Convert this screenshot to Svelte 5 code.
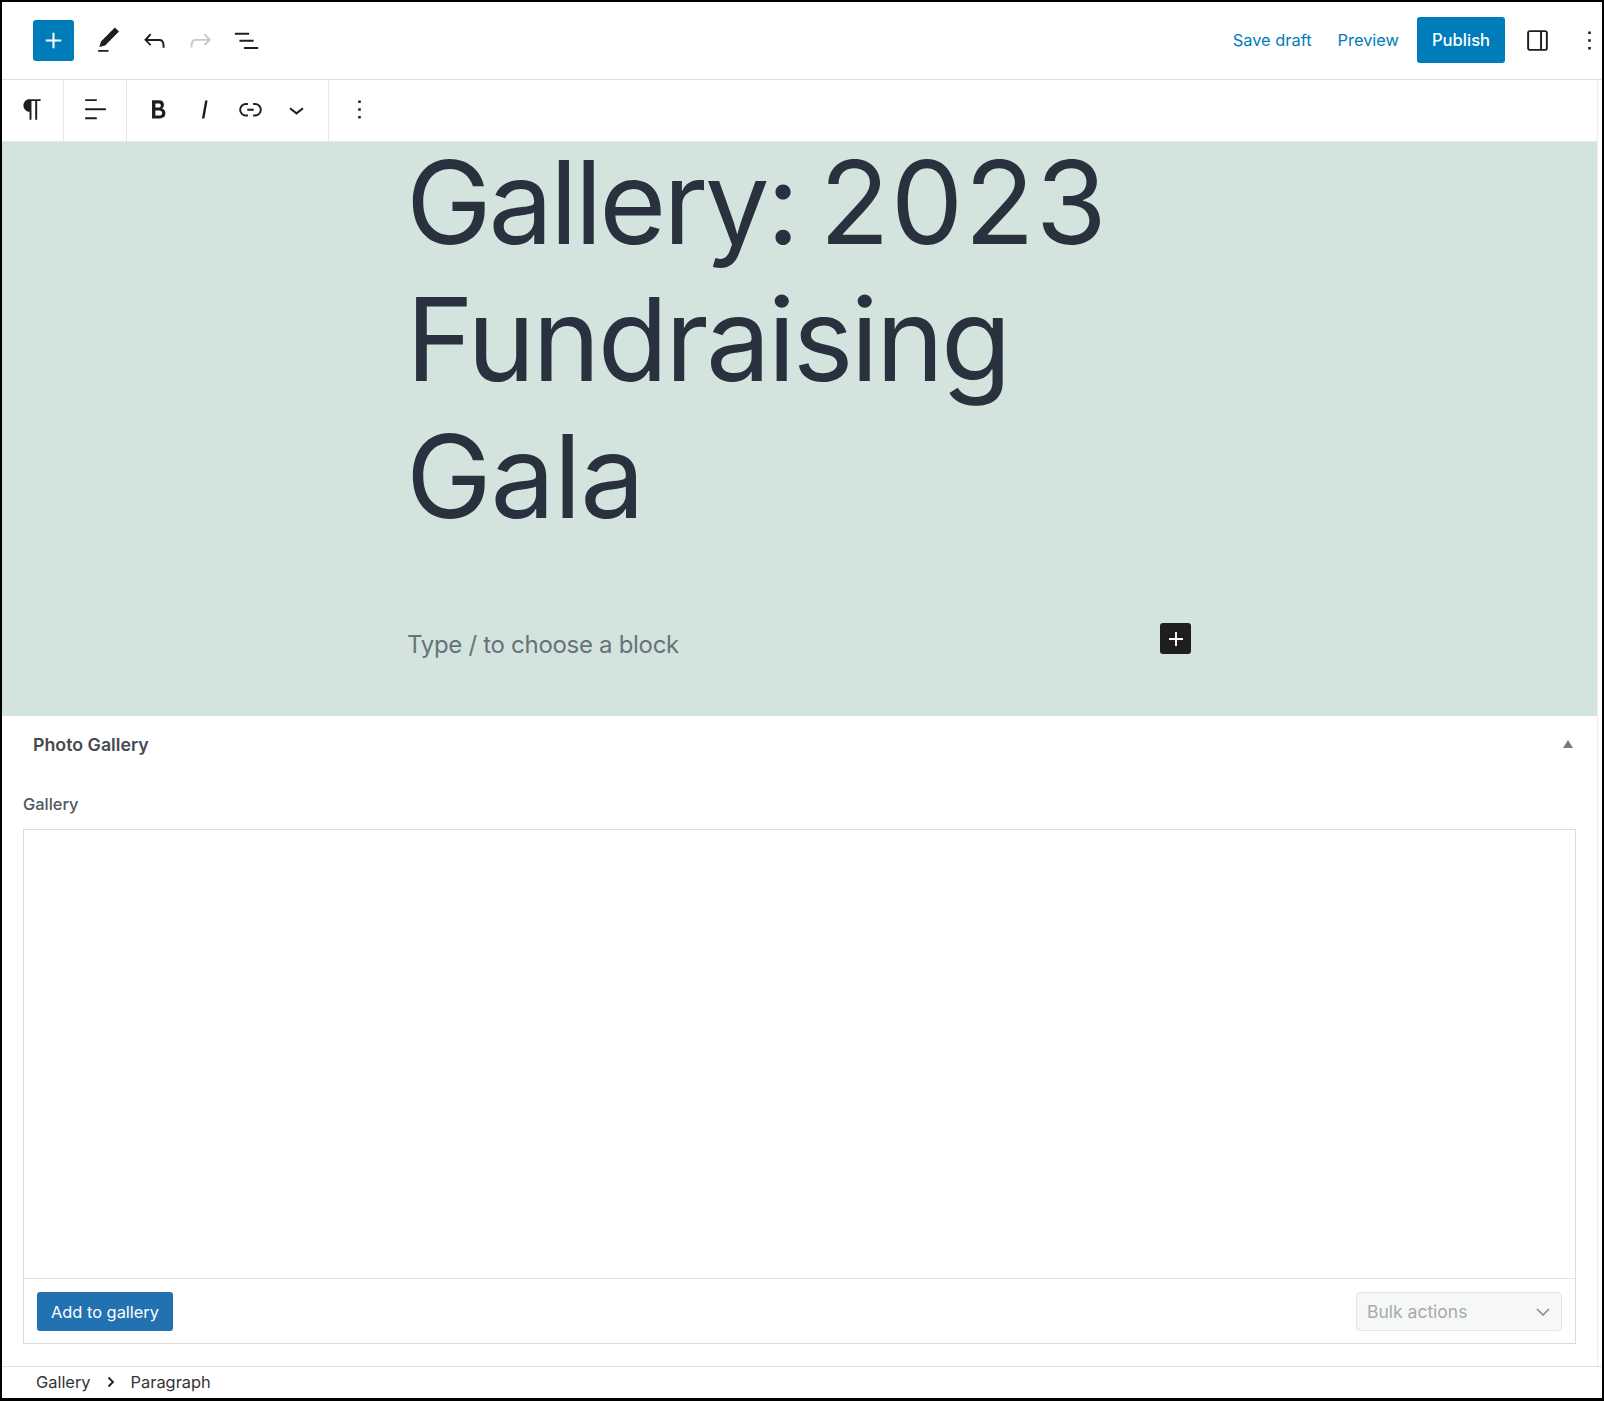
<script lang="ts">
  const icons = {
    plus: 'M18 11.2h-5.2V6h-1.6v5.2H6v1.6h5.2V18h1.6v-5.2H18z',
    pencil: 'M20.1 5.1L16.9 2 6.2 12.7l-1.3 4.4 4.5-1.3L20.1 5.1zM4 20.8h8v-1.5H4v1.5z',
    undo: 'M18.3 11.7c-.6-.6-1.4-.9-2.3-.9H6.7l2.9-3.3-1.1-1-4.5 5L8.5 16l1-1-2.7-2.7H16c.5 0 .9.2 1.3.5 1 1 1 3.4 1 4.5v.3h1.5v-.2c0-1.5 0-4.3-1.5-5.7z',
    redo: 'M15.6 6.5l-1.1 1 2.9 3.3H8c-.9 0-1.7.3-2.3.9-1.4 1.5-1.4 4.2-1.4 5.6v.2h1.5v-.3c0-1.1 0-3.5 1-4.5.3-.3.7-.5 1.3-.5h9.2L14.5 15l1.1 1.1 4.6-4.6-4.6-5z',
    list: 'M3 6h11v1.5H3V6zm3.5 5.5h11V13h-11v-1.5zM21 17H10v1.5h11V17z',
    sidebar: 'M18 4H6c-1.1 0-2 .9-2 2v12c0 1.1.9 2 2 2h12c1.1 0 2-.9 2-2V6c0-1.1-.9-2-2-2zm-4 14.5H6c-.3 0-.5-.2-.5-.5V6c0-.3.2-.5.5-.5h8v13zm4.5-.5c0 .3-.2.5-.5.5h-2.5v-13H18c.3 0 .5.2.5.5v12z',
    more: 'M13 19h-2v-2h2v2zm0-6h-2v-2h2v2zm0-6h-2V5h2v2z',
    paragraph: 'M18.3 4H9.9v-.1l-.9.2c-2.3.4-4 2.4-4 4.8s1.7 4.4 4 4.8l.7.1V20h1.5V5.5h2.9V20h1.5V5.5h2.7V4z',
    align: 'M13 5.5H4V4h9v1.5Zm7 7H4V11h16v1.5Zm-7 7H4V18h9v1.5Z',
    bold: 'M14.7 11.3c1-.6 1.5-1.6 1.5-3 0-2.3-1.3-3.4-4-3.4H7v14h5.8c1.4 0 2.5-.3 3.3-1 .8-.7 1.2-1.7 1.2-2.9.1-1.9-.8-3.1-2.6-3.7zm-5.1-4h2.3c.6 0 1.1.1 1.4.4.3.3.5.7.5 1.2s-.2 1-.5 1.2c-.3.3-.8.4-1.4.4H9.6V7.3zm4.6 9c-.4.3-1 .4-1.7.4H9.6v-3.9h2.9c.7 0 1.3.2 1.7.5.4.3.6.8.6 1.5s-.2 1.2-.6 1.5z',
    italic: 'M12.5 5L10 19h1.9l2.5-14z',
    link: 'M10 17.389H8.444A5.194 5.194 0 1 1 8.444 7H10v1.5H8.444a3.694 3.694 0 0 0 0 7.389H10v1.5ZM14 7h1.556a5.194 5.194 0 0 1 0 10.39H14v-1.5h1.556a3.694 3.694 0 0 0 0-7.39H14V7Zm-4.5 6h5v-1.5h-5V13Z',
    chevron: 'M17.5 11.6L12 16l-5.5-4.4.9-1.2L12 14l4.5-3.6 1 1.2z'
  };
</script>

{#snippet icon(d: string, cls = '')}
  <svg class={`icon ${cls}`} viewBox="0 0 24 24" aria-hidden="true"><path {d} /></svg>
{/snippet}

<div class="frame">
  <header class="topbar">
    <div class="tools">
      <button type="button" class="inserter" aria-label="Add block">{@render icon(icons.plus)}</button>
      <button type="button" class="tool" aria-label="Tools">{@render icon(icons.pencil)}</button>
      <button type="button" class="tool" aria-label="Undo">{@render icon(icons.undo)}</button>
      <button type="button" class="tool" aria-label="Redo" disabled>{@render icon(icons.redo)}</button>
      <button type="button" class="tool" aria-label="List view">{@render icon(icons.list)}</button>
    </div>
    <div class="actions">
      <button type="button" class="link-btn">Save draft</button>
      <button type="button" class="link-btn">Preview</button>
      <button type="button" class="publish">Publish</button>
      <button type="button" class="tool settings" aria-label="Settings">{@render icon(icons.sidebar)}</button>
      <button type="button" class="tool options" aria-label="Options">{@render icon(icons.more)}</button>
    </div>
  </header>

  <div class="workspace">
    <main class="content">
      <div class="block-toolbar">
        <div class="group first">
          <button type="button" class="tool" aria-label="Paragraph">{@render icon(icons.paragraph)}</button>
        </div>
        <div class="group second">
          <button type="button" class="tool" aria-label="Align">{@render icon(icons.align)}</button>
        </div>
        <div class="group third">
          <button type="button" class="tool" aria-label="Bold">{@render icon(icons.bold)}</button>
          <button type="button" class="tool" aria-label="Italic">{@render icon(icons.italic)}</button>
          <button type="button" class="tool" aria-label="Link">{@render icon(icons.link)}</button>
          <button type="button" class="tool" aria-label="More">{@render icon(icons.chevron)}</button>
        </div>
        <div class="group last">
          <button type="button" class="tool" aria-label="Options">{@render icon(icons.more)}</button>
        </div>
      </div>

      <section class="canvas">
        <h1><span class="w-gallery">Gallery:</span> <span class="w-year">2023</span> <span class="w-fund">Fundraising</span> <span class="w-gala">Gala</span></h1>
        <div class="empty-block">
          <p>Type / to choose a block</p>
          <button type="button" class="block-add" aria-label="Add block">{@render icon(icons.plus)}</button>
        </div>
      </section>

      <section class="metabox">
        <div class="metabox-head">
          <h2>Photo Gallery</h2>
          <span class="caret"></span>
        </div>
        <div class="field">
          <p class="label">Gallery</p>
          <div class="gallery-box">
            <div class="gallery-items"></div>
            <div class="gallery-foot">
              <button type="button" class="add-gallery">Add to gallery</button>
              <div class="bulk">
                <span>Bulk actions</span>
                <svg viewBox="0 0 14 8" aria-hidden="true"><path d="M1 1l6 6 6-6" /></svg>
              </div>
            </div>
          </div>
        </div>
      </section>
    </main>
    <div class="scrollbar"></div>
  </div>

  <footer class="crumbs">
    <span>Gallery</span>
    <svg viewBox="0 0 8 12" aria-hidden="true"><path d="M1.5 1.5L6 6l-4.500 4.500" /></svg>
    <span>Paragraph</span>
  </footer>
</div>

<style>
  :global(body) {
    margin: 0;
    background: #000;
  }

  .frame {
    box-sizing: border-box;
    width: 1604px;
    height: 1401px;
    border: solid #000;
    border-width: 2px 2px 3px 2px;
    background: #fff;
    display: flex;
    flex-direction: column;
    font-family: Inter, 'Liberation Sans', sans-serif;
    color: #1e1e1e;
    overflow: hidden;
  }

  button {
    font: inherit;
    border: 0;
    background: none;
    padding: 0;
    cursor: pointer;
  }

  .icon {
    width: 31px;
    height: 31px;
    display: block;
    fill: currentColor;
  }

  .topbar {
    height: 78px;
    flex: none;
    box-sizing: border-box;
    border-bottom: 1px solid #e0e0e0;
    display: flex;
    justify-content: space-between;
    align-items: center;
    padding: 0 0 1px 31px;
  }

  .tools,
  .actions {
    display: flex;
    align-items: center;
  }

  .inserter {
    width: 41px;
    height: 41px;
    margin-right: 11px;
    border-radius: 3px;
    background: #007cba;
    color: #fff;
    display: grid;
    place-items: center;
  }

  .tool {
    width: 46px;
    height: 46px;
    color: #1e1e1e;
    display: grid;
    place-items: center;
  }

  .tool:disabled {
    color: #c8c8c8;
  }

  .link-btn {
    color: #007cba;
    font-size: 16.4px;
    margin-right: 27px;
  }

  .link-btn:first-child {
    margin-right: 26px;
  }

  .publish {
    width: 88px;
    height: 46px;
    margin-left: -9px;
    border-radius: 3px;
    background: #007cba;
    color: #fff;
    font-size: 16.6px;
    font-weight: 500;
  }

  .settings {
    margin-left: 9px;
  }

  .options {
    margin-left: 6px;
    margin-right: -10px;
  }

  .workspace {
    flex: 1;
    min-height: 0;
    display: flex;
  }

  .content {
    flex: 1;
    min-width: 0;
    display: flex;
    flex-direction: column;
  }

  .scrollbar {
    width: 5px;
    flex: none;
    background: #fff;
    border-left: 1px solid #ececec;
    box-sizing: border-box;
  }

  .block-toolbar {
    height: 62px;
    flex: none;
    box-sizing: border-box;
    display: flex;
    border-bottom: 1px solid #e6e6e6;
  }

  .group {
    display: flex;
    align-items: center;
    border-right: 1px solid #e6e6e6;
    padding-bottom: 3px;
  }

  .group.first {
    width: 62px;
    padding-left: 7px;
    box-sizing: border-box;
  }

  .group.second {
    width: 63px;
    padding-left: 8px;
    box-sizing: border-box;
  }

  .group.third {
    width: 202px;
    padding-left: 8px;
    box-sizing: border-box;
  }

  .group.last {
    border-right: 0;
    padding-left: 7px;
  }

  .canvas {
    height: 574px;
    flex: none;
    box-sizing: border-box;
    background: #d3e3dd;
    padding: 0 0 0 404px;
  }

  h1 {
    margin: -8px 0 0;
    width: 780px;
    font-size: 115px;
    line-height: 137px;
    font-weight: 400;
    color: #29313f;
    letter-spacing: -2.3px;
    word-spacing: -7px;
  }

  .w-gallery {
    letter-spacing: -3.2px;
  }

  .w-year {
    letter-spacing: 1.2px;
  }

  .w-fund {
    letter-spacing: -2.75px;
  }

  .w-gala {
    letter-spacing: -1.3px;
  }

  .empty-block {
    margin-top: 72px;
    width: 785px;
    display: flex;
    justify-content: space-between;
    align-items: flex-start;
  }

  .empty-block p {
    margin: 9px 0 0 1px;
    font-size: 24px;
    line-height: 38px;
    letter-spacing: -0.3px;
    color: #66737a;
  }

  .block-add {
    width: 31px;
    height: 31px;
    margin-top: 6px;
    border-radius: 3px;
    background: #1e1e1e;
    color: #fff;
    display: grid;
    place-items: center;
  }

  .block-add .icon {
    width: 28px;
    height: 28px;
  }

  .metabox {
    flex: 1;
    min-height: 0;
    display: flex;
    flex-direction: column;
    background: #fff;
  }

  .metabox-head {
    display: flex;
    justify-content: space-between;
    align-items: center;
    height: 56px;
    padding: 0 24px 0 31px;
  }

  h2 {
    margin: 0;
    font-size: 17.8px;
    font-weight: 600;
    color: #444a50;
  }

  .caret {
    width: 0;
    height: 0;
    border: solid transparent;
    border-width: 0 5px 8px;
    border-bottom-color: #787c82;
  }

  .field {
    flex: 1;
    display: flex;
    flex-direction: column;
    padding: 0 21px 22px 21px;
    min-height: 0;
  }

  .label {
    margin: 22px 0 15px;
    font-size: 16.4px;
    line-height: 20px;
    font-weight: 500;
    color: #50575e;
  }

  .gallery-box {
    flex: 1;
    display: flex;
    flex-direction: column;
    border: 1px solid #dcdcde;
    min-height: 0;
  }

  .gallery-items {
    flex: 1;
  }

  .gallery-foot {
    height: 65px;
    box-sizing: border-box;
    border-top: 1px solid #e4e4e7;
    display: flex;
    justify-content: space-between;
    align-items: center;
    padding: 1px 13px 0 13px;
  }

  .add-gallery {
    width: 136px;
    height: 39px;
    border-radius: 3px;
    background: #2271b1;
    color: #fff;
    font-size: 16.4px;
  }

  .bulk {
    width: 206px;
    height: 39px;
    box-sizing: border-box;
    border: 1px solid #e4e5e7;
    border-radius: 4px;
    background: #f6f7f7;
    color: #a7aaad;
    font-size: 17.5px;
    display: flex;
    justify-content: space-between;
    align-items: center;
    padding: 0 11px 0 10px;
  }

  .bulk svg {
    width: 14px;
    height: 8px;
    fill: none;
    stroke: #8c8f94;
    stroke-width: 1.7;
  }

  .crumbs {
    height: 32px;
    flex: none;
    box-sizing: border-box;
    border-top: 1px solid #e0e0e0;
    display: flex;
    align-items: center;
    gap: 16px;
    padding: 0 0 2px 34px;
    font-size: 16.4px;
    color: #333;
  }

  .crumbs svg {
    width: 8px;
    height: 12px;
    fill: none;
    stroke: #1e1e1e;
    stroke-width: 1.8;
  }
</style>
